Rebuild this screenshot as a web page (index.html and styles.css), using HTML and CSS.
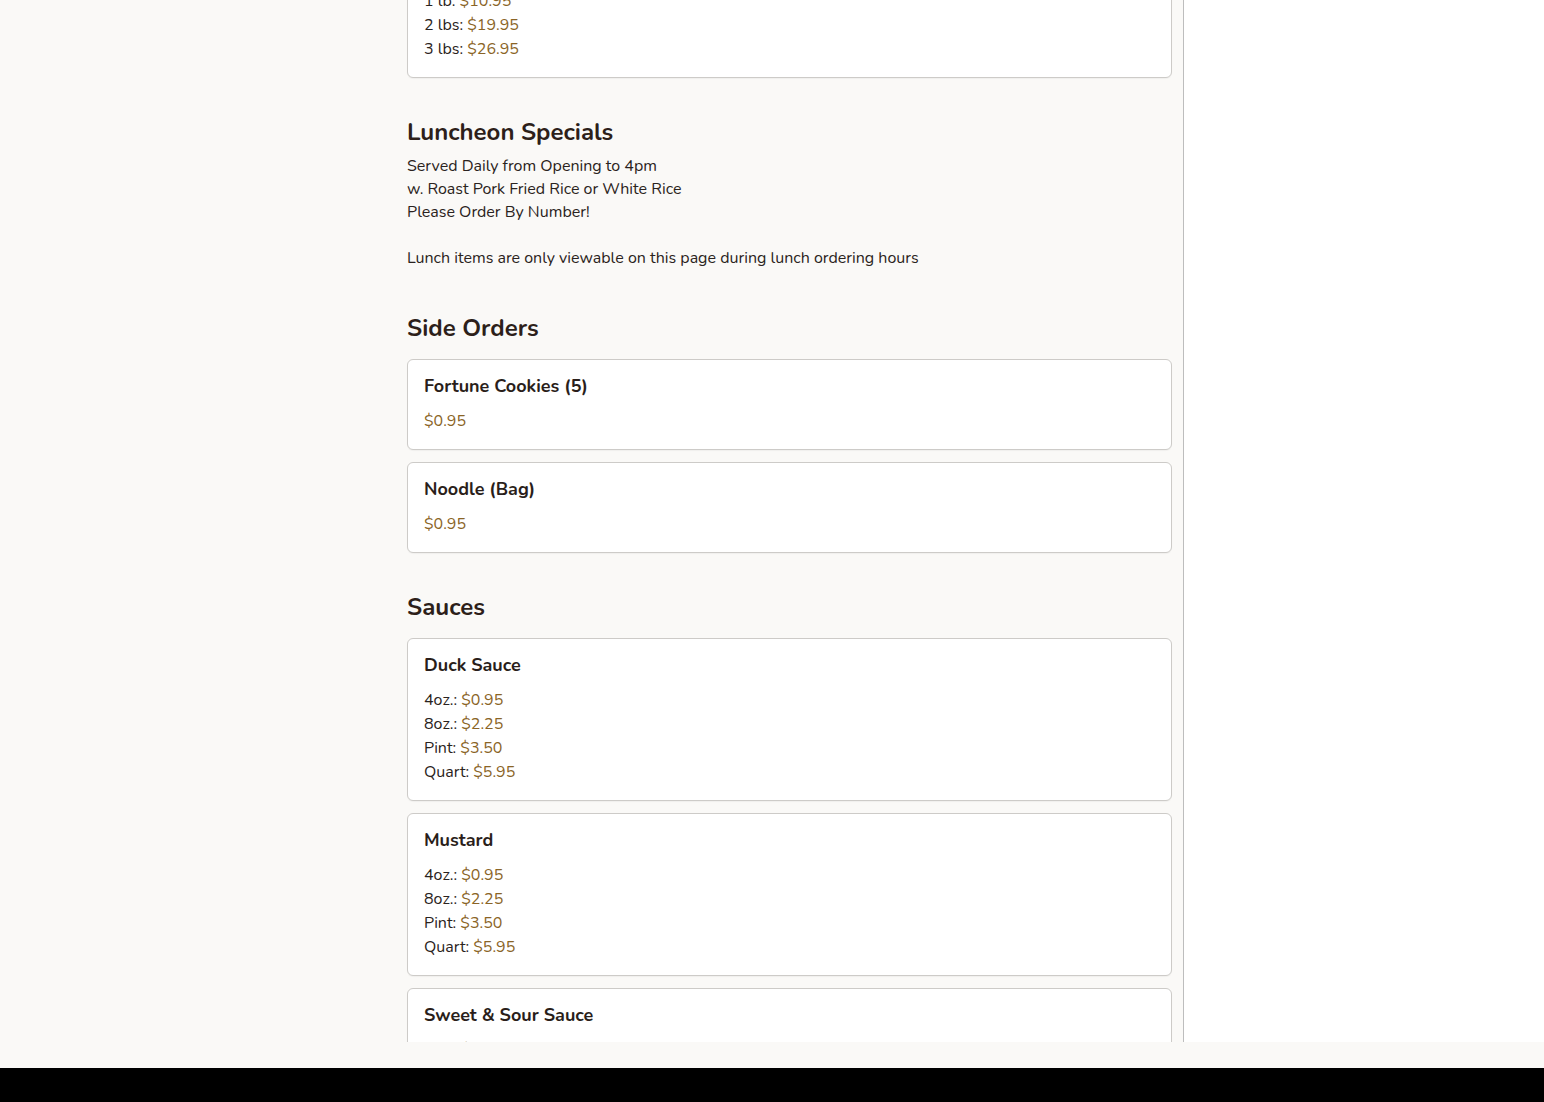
FILE: index.html
```html
<!DOCTYPE html>
<html lang="en">
<head>
<meta charset="utf-8">
<title>Menu</title>
<link rel="stylesheet" href="styles.css">
</head>
<body>
<div class="viewport">
  <div class="left-gutter"></div>
  <main class="menu">
    <div class="card card-cut">
      <div class="opt">1 lb: <span class="price">$10.95</span></div>
      <div class="opt">2 lbs: <span class="price">$19.95</span></div>
      <div class="opt">3 lbs: <span class="price">$26.95</span></div>
    </div>

    <section class="section">
      <h2 class="section-title">Luncheon Specials</h2>
      <p class="section-note">Served Daily from Opening to 4pm<br>w. Roast Pork Fried Rice or White Rice<br>Please Order By Number!<br><br>Lunch items are only viewable on this page during lunch ordering hours</p>
    </section>

    <section class="section">
      <h2 class="section-title">Side Orders</h2>
      <div class="card">
        <h3 class="item-title">Fortune Cookies (5)</h3>
        <div class="opt"><span class="price">$0.95</span></div>
      </div>
      <div class="card">
        <h3 class="item-title">Noodle (Bag)</h3>
        <div class="opt"><span class="price">$0.95</span></div>
      </div>
    </section>

    <section class="section">
      <h2 class="section-title">Sauces</h2>
      <div class="card">
        <h3 class="item-title">Duck Sauce</h3>
        <div class="opt">4oz.: <span class="price">$0.95</span></div>
        <div class="opt">8oz.: <span class="price">$2.25</span></div>
        <div class="opt">Pint: <span class="price">$3.50</span></div>
        <div class="opt">Quart: <span class="price">$5.95</span></div>
      </div>
      <div class="card">
        <h3 class="item-title">Mustard</h3>
        <div class="opt">4oz.: <span class="price">$0.95</span></div>
        <div class="opt">8oz.: <span class="price">$2.25</span></div>
        <div class="opt">Pint: <span class="price">$3.50</span></div>
        <div class="opt">Quart: <span class="price">$5.95</span></div>
      </div>
      <div class="card">
        <h3 class="item-title">Sweet &amp; Sour Sauce</h3>
        <div class="opt">4oz.: <span class="price">$0.95</span></div>
        <div class="opt">8oz.: <span class="price">$2.25</span></div>
        <div class="opt">Pint: <span class="price">$3.50</span></div>
        <div class="opt">Quart: <span class="price">$5.95</span></div>
      </div>
    </section>
  </main>
  <aside class="side-panel"></aside>
</div>
<div class="strip"></div>
<div class="blackbar"></div>
</body>
</html>
```

FILE: styles.css
```css
* { box-sizing: border-box; }
html, body { margin: 0; padding: 0; }
body {
  height: 1102px;
  overflow: hidden;
  display: flex;
  flex-direction: column;
  background: #faf9f7;
  font-family: "Nunito", "Lato", "Open Sans", sans-serif;
  color: #2a2320;
  font-size: 16px;
}
.viewport {
  height: 1042px;
  flex: none;
  display: flex;
  overflow: hidden;
}
.left-gutter { width: 407px; flex: none; }
.menu {
  width: 765px;
  flex: none;
  margin-right: 11px;
}
.side-panel {
  flex: 1;
  background: #ffffff;
  border-left: 1px solid #bdbdbd;
}
.strip { height: 26px; flex: none; background: #faf9f7; }
.blackbar { height: 34px; flex: none; background: #000; }

.card {
  background: #fff;
  border: 1px solid #cdcbc8;
  border-radius: 6px;
  padding: 16px;
  margin-bottom: 12px;
  box-shadow: 0 1px 1px rgba(0,0,0,0.04);
}
.card-cut { margin-top: -28px; }
.item-title {
  margin: 0 0 12px;
  font-size: 18px;
  line-height: 21px;
  font-weight: 700;
  color: #2a1e1a;
}
.opt { line-height: 24px; font-size: 16px; }
.price { color: #8a6426; }

.section { margin-top: 39px; }
.section-title {
  margin: 0 0 16px;
  font-size: 24px;
  line-height: 30px;
  font-weight: 700;
  color: #2d1f1a;
}
.section-note {
  margin: -8px 0 0;
  line-height: 23px;
  font-size: 16px;
  padding-bottom: 4px;
}
```
